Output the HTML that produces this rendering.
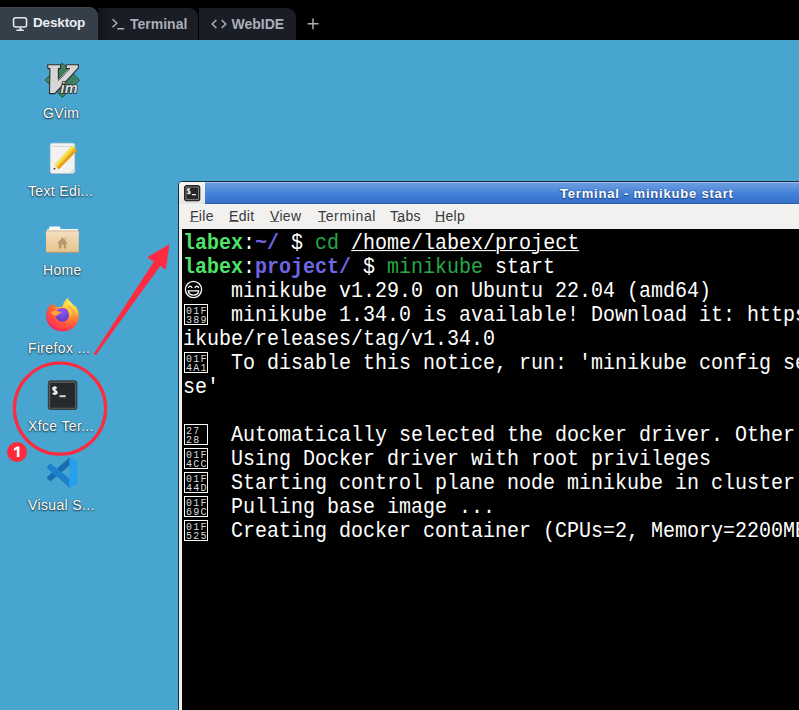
<!DOCTYPE html>
<html><head><meta charset="utf-8">
<style>
*{margin:0;padding:0;box-sizing:border-box}
html,body{width:799px;height:710px;overflow:hidden}
body{position:relative;background:#48a5cf;font-family:"Liberation Sans",sans-serif}
.abs{position:absolute}
svg{position:absolute;overflow:visible}
#tabbar{position:absolute;left:0;top:0;width:799px;height:40px;background:#000}
.tab{position:absolute;top:8px;height:32px;color:#abafb8;font-size:14px;font-weight:bold}
#t1{left:0;top:7px;height:33px;width:98px;background:#343f4a;border-top-right-radius:9px;color:#eceef1;box-shadow:inset 0 1px 0 #3f4a55}
#t2{left:98px;width:100px;background:linear-gradient(90deg,#111318,#1a1d26 14px);border-top-right-radius:9px}
#t3{left:199px;width:97px;background:#1a1d26;border-top-right-radius:9px}
.tab span{position:absolute;top:9px;line-height:16px;white-space:nowrap}
.lbl{position:absolute;color:#fff;font-size:14px;line-height:16px;letter-spacing:0.35px;text-shadow:0 1px 2px rgba(0,0,0,.75),0 0 1px rgba(0,0,0,.6);white-space:nowrap}
#win{position:absolute;left:178px;top:181px;width:700px;height:600px;background:#f2f1f0;border:1px solid #1c2a38;border-radius:4px 4px 0 0;overflow:hidden}
#ticon{position:absolute;left:0;top:0;width:26px;height:22px;background:linear-gradient(#f7f6f5,#e6e5e4)}
#title{position:absolute;left:26px;top:0;width:700px;height:22px;background:linear-gradient(#6c9fe2,#5a8fdc 30%,#4280d8 55%,#3a74cf 85%,#3870cc);box-shadow:inset 0 1px 0 #9cc0ef,inset 0 -1px 0 #2e5d9e}
#title .t{position:absolute;left:355px;top:4.5px;line-height:14px;color:#fff;font-weight:bold;font-size:13px;letter-spacing:0.8px;text-shadow:0 1px 1px #1b3c78,0 0 2px #2a5aa8}
#menu{position:absolute;left:0;top:22px;height:25px;width:700px;font-size:14px;color:#363a3c;letter-spacing:0.3px;border-top:1px solid #e6f8fc}
#menu span{position:absolute;top:3px;line-height:16px}
#menu u{text-decoration:none;background:linear-gradient(#6a6a6a,#6a6a6a) no-repeat 0 13px/100% 1px}
#term{position:absolute;left:3px;top:47px;width:700px;height:560px;background:#000}
#txt{position:absolute;left:1px;top:3px;font-family:"Liberation Mono",monospace;font-size:20px;line-height:24px;color:#fff;white-space:pre}
.ln{height:24px;white-space:pre}
.sy{display:inline-block;vertical-align:top;transform:scaleY(1.06);transform-origin:0 17.3px}
.g{color:#4fe36a;font-weight:bold}
.gn{color:#26a845}
.p{color:#6f66e4;font-weight:bold}
.u{text-decoration:underline;text-decoration-thickness:1px;text-underline-offset:1px}
.emo{display:inline-block;width:24px;height:21px;vertical-align:-4px;position:relative}
.tofu{display:inline-block;width:24px;height:21px;margin-left:1px;margin-right:-1px;border:1px solid #fff;vertical-align:-4px;position:relative}
.tofu i{position:absolute;left:1px;font-style:normal;font-family:"Liberation Mono",monospace;font-size:10px;line-height:8px;letter-spacing:1.3px;color:#ddd}
.tofu i.a{top:2.5px}.tofu i.b{top:11.5px}
</style></head><body>
<div id="tabbar">
 <div class="tab" id="t1">
  <svg style="left:12px;top:9px" width="16" height="16" viewBox="0 0 16 16"><rect x="1.55" y="1.7" width="13" height="9.35" rx="2" fill="none" stroke="#e6e8eb" stroke-width="1.55"/><path d="M7.5 11.6H9.5V13.4H11.4L12.1 14.9H4.1L4.8 13.4H7.5z" fill="#e6e8eb"/></svg>
  <span style="left:33px;top:8px;font-size:13.5px;letter-spacing:-0.15px">Desktop</span></div>
 <div class="tab" id="t2">
  <svg style="left:13px;top:9px" width="16" height="16" viewBox="0 0 16 16"><path d="M1.5 2.2L5.8 6.25 1.5 10.3" stroke="#abafb8" stroke-width="1.5" fill="none"/><path d="M6.3 11.75H13.2" stroke="#abafb8" stroke-width="1.5"/></svg>
  <span style="left:32px;top:8px">Terminal</span></div>
 <div class="tab" id="t3">
  <svg style="left:12px;top:9px" width="16" height="16" viewBox="0 0 16 16"><path d="M5.3 2.95L1.2 7 5.3 11.05M10.7 2.95L14.8 7 10.7 11.05" stroke="#abafb8" stroke-width="1.5" fill="none"/></svg>
  <span style="left:32.5px;top:8px">WebIDE</span></div>
 <svg style="left:307px;top:18px" width="12" height="12" viewBox="0 0 12 12"><path d="M6 0.4V11.3M0.6 5.85H11.5" stroke="#abafb8" stroke-width="1.5"/></svg>
</div>

<!-- GVim -->
<svg style="left:42px;top:60px" width="40" height="40" viewBox="0 0 40 40">
 <path d="M20.3 3.1L37.5 20 20.3 37.5 3.1 20z" fill="#3e7e62" stroke="#1f5b3e" stroke-width="1"/>
 <path d="M20.3 5.2L35.4 20 20.3 35.4 5.2 20z" fill="none" stroke="#4f9a72" stroke-width="0.6"/>
 <path d="M5.6 4.8H18.6L18.4 8.6H16.4V20L27.6 8.6H24.3L24 4.8H36.6L36.2 8.2 12.8 33.6H7.5L7.9 8.6H6z" fill="#d6d6d6" stroke="#2c2c2c" stroke-width="1.1" stroke-linejoin="round"/>
 <path d="M16.4 19.6L27.6 8.6" stroke="#fff" stroke-width="1" stroke-dasharray="1 0.6"/>
 <text x="18.6" y="32.5" style="font-family:'Liberation Sans';font-style:italic;font-weight:bold;font-size:14.5px" fill="#dadada" stroke="#2a2a2a" stroke-width="1.6" paint-order="stroke" letter-spacing="0.2">im</text>
</svg>
<!-- Text editor -->
<svg style="left:45px;top:140px" width="35" height="38" viewBox="0 0 35 38">
 <rect x="5.3" y="3.8" width="24.4" height="30.4" rx="2" fill="#2f6fa8" opacity="0.55"/>
 <rect x="5.3" y="3.2" width="24.4" height="30.2" rx="2" fill="#f4f2f0" stroke="#d9d6d2" stroke-width="0.5"/>
 <path d="M7 6.4H26.7" stroke="#9a9a9a" stroke-width="0.7" stroke-dasharray="1 1.2"/>
 <path d="M24.5 33L29.5 28V33z" fill="#dedbd7"/>
 <path d="M9.2 25.2L27.2 5.6 32.2 10.6 13.6 29.6z" fill="#eec12e"/>
 <path d="M9.2 25.2L27.2 5.6 29 7.4 11 27z" fill="#f8e14d"/>
 <path d="M13.6 29.6L32.2 10.6 30.6 9 12 28z" fill="#e89a1c"/>
 <path d="M9.2 25.2L13.6 29.6 8.4 29.8z" fill="#f6f1e6"/>
 <path d="M8.4 29.8L9.1 27.4 10.8 29.1z" fill="#2a2a2a"/>
</svg>
<!-- Home -->
<svg style="left:42px;top:222px" width="40" height="36" viewBox="0 0 40 36">
 <path d="M5 9.5V7.2H6.9L7.4 4.6H18L18.4 7H36V9.5z" fill="#f7f7f7"/>
 <path d="M4 8.9H36.8V30.5H4z" fill="url(#fold)" />
 <path d="M4 8.9H36.8" stroke="#c8aa7c" stroke-width="0.8"/>
 <path d="M4.2 30.3H36.6" stroke="#b39469" stroke-width="0.8"/>
 <path d="M20.6 15.2L15 21.4H16.8V26.4H19.5V22.8H21.8V26.4H24.1V21.4H25.9z" fill="#b8976a"/><rect x="22.9" y="15.8" width="1.3" height="1.4" fill="#b8976a"/>
 <defs><linearGradient id="fold" x1="0" y1="0" x2="0" y2="1"><stop offset="0" stop-color="#f3dfbf"/><stop offset="1" stop-color="#e7c28e"/></linearGradient></defs>
</svg>
<!-- Firefox -->
<svg style="left:42px;top:294px" width="40" height="40" viewBox="0 0 40 40">
 <defs>
  <radialGradient id="ffo" cx="0.78" cy="0.12" r="1.0"><stop offset="0" stop-color="#fff35a"/><stop offset="0.32" stop-color="#ffc23a"/><stop offset="0.55" stop-color="#ff7a34"/><stop offset="0.8" stop-color="#ff3d4a"/><stop offset="1" stop-color="#f0226a"/></radialGradient>
  <radialGradient id="ffp" cx="0.5" cy="0.3" r="0.75"><stop offset="0" stop-color="#8a58f2"/><stop offset="1" stop-color="#5a3cc6"/></radialGradient>
 </defs>
 <path d="M25.4 3.9C23.6 6.2 20.8 8.8 20.4 12.9 17.8 12.6 15.2 12.9 13.6 13.6L14 10.6 12.2 12.5 10 9.6C6.6 12.6 4.2 17.2 4.2 22.6 4.2 31 11.3 37.5 20.5 37.5 29.8 37.5 36.9 30.5 36.9 22 36.9 17 35 13.5 33 11.5L32.6 12.6C30.8 9.6 27.2 7.2 25.4 3.9z" fill="url(#ffo)"/>
 <path d="M4.6 19C6 14 8 11.5 10 9.6L12.2 12.5 14 10.6 13.6 13.6C10 15.5 8.2 18.6 8.6 22 9 27.5 14 31.5 20.5 31.5 26 31.5 30.5 27 30.2 21 30 17 27.5 13.8 24.6 12.8 25 12.2 25.4 11.6 26 11 30.5 12.8 33.4 17 33.4 22 33.4 29.2 27.5 35 20.5 35 12.5 35 6.6 29.8 5.2 23.5z" fill="#ff6236" opacity="0.28"/>
 <circle cx="20.3" cy="21" r="6.7" fill="url(#ffp)"/>
 <path d="M15.2 16.4C16.6 14.8 18.4 14 20.5 14 23.2 14 25.4 15.2 26.6 16.9 25.6 16.5 24.6 16.6 24.4 17.2 23 15.9 19 15.4 15.2 16.4z" fill="#a848dc"/>
 <path d="M8.7 18.6C10 17.2 12.2 16.8 14.2 17 16.6 17.3 18.6 18 20.2 18.1 18.4 19.1 16.6 19.6 15.6 21.7 14.4 21.4 13.2 21.2 11.8 21.2 10.4 21 9.4 20 8.7 18.6z" fill="#ffa33a"/>
</svg>
<!-- Terminal icon -->
<svg style="left:44px;top:376px" width="38" height="38" viewBox="0 0 38 38">
 <rect x="4.3" y="4.8" width="28.6" height="28.7" rx="2" fill="#2a2d30" stroke="#33373a" stroke-width="0.8"/>
 <rect x="5.6" y="6.1" width="26" height="26.1" rx="1" fill="#25292c" stroke="#5f6366" stroke-width="1.1"/>
 <path d="M12.8 12.2Q11.9 11.3 10.7 11.3 8.9 11.3 8.9 12.9 8.9 14.1 10.9 14.6 12.9 15.1 12.9 16.6 12.9 18 10.8 18 9.5 18 8.6 17.2M10.8 10.3V19" fill="none" stroke="#f2f2f2" stroke-width="1.6"/>
 <rect x="15.5" y="19.2" width="6.2" height="2" fill="#d4d4d4"/>
</svg>
<!-- VS Code -->
<svg style="left:42px;top:454px" width="40" height="38" viewBox="0 0 40 38">
 <path d="M27.6 3.5L5.6 22.6C4.8 23.4 4.9 24.6 5.7 25.3L7.2 26.5C7.9 27.1 8.9 27 9.6 26.5L27.6 11.6z" fill="#1a6db0"/>
 <path d="M5.7 11.7C4.9 12.4 4.8 13.6 5.6 14.4L27.6 33.7V24.6L9.6 10.5C8.9 10 7.9 9.9 7.2 10.5z" fill="#1d82cd"/>
 <path d="M27.6 3.5L34.4 6.6C35.2 7 35.6 7.7 35.6 8.5V28.6C35.6 29.4 35.2 30.1 34.4 30.5L27.6 33.7z" fill="#27a0ec"/>
</svg>

<div class="lbl" style="left:43px;top:105px">GVim</div>
<div class="lbl" style="left:28px;top:183px">Text Edi...</div>
<div class="lbl" style="left:43px;top:262px">Home</div>
<div class="lbl" style="left:28px;top:340px">Firefox ...</div>
<div class="lbl" style="left:28px;top:418px">Xfce Ter...</div>
<div class="lbl" style="left:28px;top:497px">Visual S...</div>

<div id="win">
 <div id="ticon"><svg style="left:5px;top:3px" width="17" height="17" viewBox="0 0 17 17"><rect x="0.6" y="0.6" width="15.2" height="15.2" rx="1.6" fill="#1e1e1e" stroke="#1a1a1a" stroke-width="1"/><rect x="2" y="2" width="12.4" height="12.4" fill="#262626" stroke="#8a8a8a" stroke-width="0.9"/><path d="M6.2 4.2Q5.6 3.7 4.8 3.7 3.4 3.7 3.4 4.8 3.4 5.7 4.8 6.1 6.3 6.5 6.3 7.6 6.3 8.7 4.8 8.7 3.8 8.7 3.2 8.1M4.8 2.9V9.5" fill="none" stroke="#efefef" stroke-width="1.1"/><rect x="7.8" y="9" width="4.2" height="1.3" fill="#e8e8e8"/></svg></div>
 <div id="title"><div class="t">Terminal - minikube start</div></div>
 <div id="menu"><span style="left:11px"><u>F</u>ile</span><span style="left:50px"><u>E</u>dit</span><span style="left:91px"><u>V</u>iew</span><span style="left:139px;letter-spacing:0.65px"><u>T</u>erminal</span><span style="left:211px">T<u>a</u>bs</span><span style="left:256px"><u>H</u>elp</span></div>
 <div id="term"><div id="txt"><div class="ln"><span class="sy"><span class="g">labex</span>:<span class="p">~/</span> $ <span class="gn">cd</span> <span class="u">/home/labex/project</span></span></div><div class="ln"><span class="sy"><span class="g">labex</span>:<span class="p">project/</span> $ <span class="gn">minikube</span> start</span></div><div class="ln"><span class="emo"><svg style="left:0;top:0" width="24" height="21" viewBox="0 0 24 21"><circle cx="10.5" cy="9.5" r="8.1" fill="none" stroke="#fff" stroke-width="1.3"/><path d="M5.2 8.1Q7.2 4 9.2 8.1M11.8 8.1Q13.8 4 15.8 8.1" fill="none" stroke="#fff" stroke-width="1.25"/><path d="M5.3 10.9H15.7Q15.5 15 10.5 15 5.5 15 5.3 10.9z" fill="none" stroke="#fff" stroke-width="1.25"/></svg></span><span class="sy">  minikube v1.29.0 on Ubuntu 22.04 (amd64)</span></div><div class="ln"><span class="tofu"><i class="a">01F</i><i class="b">389</i></span><span class="sy">  minikube 1.34.0 is available! Download it: https</span></div><div class="ln"><span class="sy">ikube/releases/tag/v1.34.0</span></div><div class="ln"><span class="tofu"><i class="a">01F</i><i class="b">4A1</i></span><span class="sy">  To disable this notice, run: 'minikube config set WantUpdateNotification fal</span></div><div class="ln"><span class="sy">se'</span></div><div class="ln"><span class="sy"> </span></div><div class="ln"><span class="tofu"><i class="a">27</i><i class="b">28</i></span><span class="sy">  Automatically selected the docker driver. Other choices: none, ssh</span></div><div class="ln"><span class="tofu"><i class="a">01F</i><i class="b">4CC</i></span><span class="sy">  Using Docker driver with root privileges</span></div><div class="ln"><span class="tofu"><i class="a">01F</i><i class="b">44D</i></span><span class="sy">  Starting control plane node minikube in cluster minikube</span></div><div class="ln"><span class="tofu"><i class="a">01F</i><i class="b">69C</i></span><span class="sy">  Pulling base image ...</span></div><div class="ln"><span class="tofu"><i class="a">01F</i><i class="b">525</i></span><span class="sy">  Creating docker container (CPUs=2, Memory=2200MB) ...</span></div></div></div>
</div>

<!-- annotations -->
<svg style="left:0;top:0" width="799" height="710" viewBox="0 0 799 710">
 <circle cx="60" cy="408.6" r="45.6" fill="none" stroke="#fe2b3f" stroke-width="3.2"/>
 <path d="M96.33 354.51L164.3 260.26 157.7 255.74 94.27 353.09z" fill="#fe2b40"/>
 <circle cx="95.3" cy="353.8" r="1.25" fill="#fe2b40"/>
 <path d="M168.7 245.2L148.3 257.3 165.3 268.7z" fill="#fe2b40" stroke="#fe2b40" stroke-width="1.2" stroke-linejoin="round"/>
 <circle cx="17" cy="452" r="10" fill="#fe2b3d"/>
 <path d="M16.8 446.6H19.4V457.1H16.8V449.6L13.9 450.8V448.4z" fill="#fff"/>
</svg>
</body></html>
